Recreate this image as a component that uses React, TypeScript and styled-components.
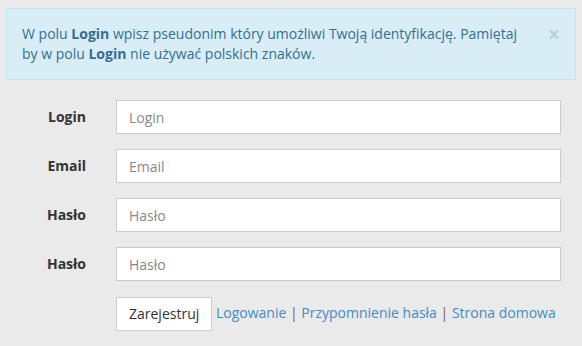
import React from 'react';
import styled, {createGlobalStyle} from "styled-components";

const GlobalStyle = createGlobalStyle`
  html, body {
    margin: 0;
    padding: 0;
    background: #eaeaea;
  }
  * { box-sizing: border-box; }
`

const fields = [
    {label: 'Login', placeholder: 'Login', type: 'text'},
    {label: 'Email', placeholder: 'Email', type: 'email'},
    {label: 'Hasło', placeholder: 'Hasło', type: 'password'},
    {label: 'Hasło', placeholder: 'Hasło', type: 'password'},
]

export default function App() {
    return (
        <Page>
            <GlobalStyle/>
            <Alert>
                <AlertText>
                    W polu <b>Login</b> wpisz pseudonim który umożliwi Twoją identyfikację. Pamiętaj
                    by w polu <b>Login</b> nie używać polskich znaków.
                </AlertText>
                <Close>×</Close>
            </Alert>
            <Form>
                {fields.map((f, i) => (
                    <Row key={i}>
                        <Label>{f.label}</Label>
                        <Input type={f.type} placeholder={f.placeholder}/>
                    </Row>
                ))}
                <Row>
                    <span/>
                    <Actions>
                        <Button>Zarejestruj</Button>{' '}
                        <Link href="#">Logowanie</Link> <Sep>|</Sep> <Link href="#">Przypomnienie hasła</Link> <Sep>|</Sep> <Link href="#">Strona domowa</Link>
                    </Actions>
                </Row>
            </Form>
        </Page>
    );
}

const Page = styled.div`
  width: 582px;
  height: 346px;
  padding: 8px 6px 0 6px;
  font-family: "Open Sans", sans-serif;
  font-size: 14px;
  line-height: 20px;
  color: #333;
`
const Alert = styled.div`
  display: flex;
  align-items: flex-start;
  justify-content: space-between;
  height: 72px;
  padding: 15px;
  background: #d9edf7;
  border: 1px solid #bce8f1;
  color: #31708f;
`
const AlertText = styled.p`
  margin: 0;
  max-width: 505px;
  b { font-weight: 700; }
`
const Close = styled.span`
  font-size: 21px;
  font-weight: 700;
  line-height: 20px;
  color: #31708f;
  opacity: 0.2;
`
const Form = styled.div`
  display: flex;
  flex-direction: column;
  gap: 15px;
  padding-top: 20px;
`
const Row = styled.div`
  display: grid;
  grid-template-columns: 80px 445px;
  column-gap: 30px;
  align-items: center;
`
const Label = styled.label`
  text-align: right;
  font-weight: 700;
  color: #333;
`
const Input = styled.input`
  height: 34px;
  padding: 6px 12px;
  border: 1px solid #ccc;
  background: #fff;
  font-family: inherit;
  font-size: 14px;
  color: #555;
  outline: none;
  &::placeholder { color: #888; }
`
const Actions = styled.div`
  white-space: nowrap;
  line-height: 34px;
`
const Button = styled.button`
  height: 34px;
  padding: 6px 12px;
  border: 1px solid #ccc;
  background: #fff;
  font-family: inherit;
  font-size: 14px;
  line-height: 20px;
  color: #333;
  vertical-align: middle;
`
const Link = styled.a`
  color: #428bca;
  text-decoration: none;
`
const Sep = styled.span`
  color: #7a5a40;
`
